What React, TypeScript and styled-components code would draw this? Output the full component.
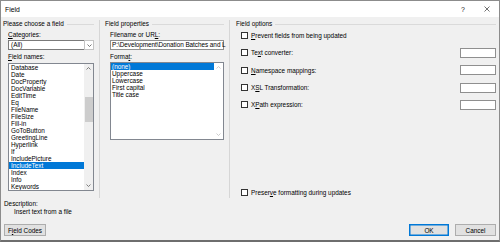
import styled, { createGlobalStyle } from 'styled-components';

const GlobalStyle = createGlobalStyle`
  html, body {
    margin: 0;
    padding: 0;
    background: #f0f0f0;
  }
  body {
    font-family: 'Liberation Sans', Arial, sans-serif;
    font-size: 6.4px;
    color: #000;
  }
`;

const Window = styled.div`
  width: 500px;
  height: 242px;
  box-sizing: border-box;
  border: 1px solid #8c8c8c;
  border-bottom: 2px solid #6e6e6e;
  background: #f0f0f0;
  display: flex;
  flex-direction: column;
  overflow: hidden;
`;

const TitleBar = styled.div`
  height: 16px;
  flex: none;
  background: #fff;
  display: flex;
  align-items: center;
  padding-left: 4px;
`;

const Title = styled.div`
  flex: 1;
  font-size: 6.8px;
`;

const TitleButton = styled.div`
  width: 24px;
  height: 16px;
  display: flex;
  align-items: center;
  justify-content: center;
  font-size: 7px;
  color: #222;
`;

const Columns = styled.div`
  height: 181px;
  box-sizing: border-box;
  padding-top: 3px;
  display: grid;
  grid-template-columns: 98px 1px 129px 1px 1fr;
`;

const Separator = styled.div`
  background: #d6d6d6;
`;

const Column = styled.div<{ $left: number; $right: number }>`
  display: flex;
  flex-direction: column;
  padding-left: ${(p) => p.$left}px;
  padding-right: ${(p) => p.$right}px;
  min-width: 0;
`;

const GroupHeader = styled.div`
  height: 8px;
  line-height: 8px;
  display: flex;
  align-items: center;
  gap: 3px;
  white-space: nowrap;

  &::after {
    content: '';
    flex: 1;
    border-top: 1px solid #dadada;
  }
`;

const Fields = styled.div`
  margin-left: 5px;
  display: flex;
  flex-direction: column;
`;

const Label = styled.div<{ $top: number }>`
  height: 8px;
  line-height: 8px;
  margin-top: ${(p) => p.$top}px;
  white-space: nowrap;
`;

const Key = styled.span`
  text-decoration: underline;
  text-underline-offset: 0.5px;
`;

const ComboBox = styled.div`
  margin-top: 1px;
  height: 10px;
  box-sizing: border-box;
  border: 1px solid #7a7a7a;
  background: #fff;
  display: flex;
  align-items: stretch;
`;

const ComboText = styled.div`
  flex: 1;
  line-height: 8px;
  padding-left: 2px;
`;

const ComboArrow = styled.div`
  width: 8px;
  border: 1px solid #c4c4c4;
  margin: -1px -1px -1px 0;
  background: #fff;
  display: flex;
  align-items: center;
  justify-content: center;
`;

const TextInput = styled.div<{ $width?: number; $top?: number }>`
  height: 10px;
  width: ${(p) => (p.$width ? `${p.$width}px` : 'auto')};
  margin-top: ${(p) => p.$top ?? 0}px;
  box-sizing: border-box;
  border: 1px solid #8f8f8f;
  background: #fff;
  line-height: 8px;
  padding-left: 1px;
  white-space: nowrap;
  letter-spacing: -0.05px;
  flex: none;
`;

const ListBox = styled.div<{ $height: number; $top: number }>`
  margin-top: ${(p) => p.$top}px;
  height: ${(p) => p.$height}px;
  box-sizing: border-box;
  border: 1px solid #828790;
  background: #fff;
  display: flex;
  overflow: hidden;
`;

const ListItems = styled.div`
  flex: 1;
  display: flex;
  flex-direction: column;
`;

const ListItem = styled.div<{ $selected?: boolean; $pad: number }>`
  height: 7px;
  line-height: 7px;
  flex: none;
  padding-left: ${(p) => p.$pad}px;
  white-space: nowrap;
  background: ${(p) => (p.$selected ? '#0078d7' : 'transparent')};
  color: ${(p) => (p.$selected ? '#fff' : '#000')};
`;

const ScrollBar = styled.div<{ $disabled?: boolean }>`
  width: 9px;
  flex: none;
  background: ${(p) => (p.$disabled ? '#fff' : '#f0f0f0')};
  display: flex;
  flex-direction: column;
  align-items: center;
  color: ${(p) => (p.$disabled ? '#c0c0c0' : '#606060')};
`;

const ScrollArrow = styled.div`
  height: 9px;
  width: 9px;
  flex: none;
  display: flex;
  align-items: center;
  justify-content: center;
`;

const ScrollTrack = styled.div`
  flex: 1;
  width: 100%;
  display: flex;
  flex-direction: column;
  align-items: center;
`;

const Thumb = styled.div`
  width: 8px;
  height: 25px;
  margin-top: 24px;
  background: #cdcdcd;
`;

const OptionRows = styled.div`
  margin-top: -1px;
  margin-left: 5px;
  display: flex;
  flex-direction: column;
  flex: 1;
`;

const OptionRow = styled.div<{ $push?: boolean }>`
  height: ${(p) => (p.$push ? 10 : 17.3)}px;
  margin-top: ${(p) => (p.$push ? 'auto' : '0')};
  margin-bottom: ${(p) => (p.$push ? 1 : 0)}px;
  display: flex;
  align-items: center;
  gap: 3px;
  white-space: nowrap;
`;

const CheckBox = styled.div`
  width: 7px;
  height: 7px;
  box-sizing: border-box;
  border: 1px solid #333;
  background: #fff;
  flex: none;
`;

const OptionLabel = styled.div`
  flex: 1;
`;

const Description = styled.div`
  padding-left: 3px;
  margin-top: 2px;
`;

const DescLine = styled.div<{ $indent?: number }>`
  height: 8px;
  line-height: 8px;
  padding-left: ${(p) => p.$indent ?? 0}px;
`;

const Footer = styled.div`
  margin-top: 8px;
  padding: 0 3px;
  display: flex;
  gap: 6px;
`;

const Button = styled.div<{ $width: number; $default?: boolean }>`
  width: ${(p) => p.$width}px;
  height: 12px;
  box-sizing: border-box;
  border: 1px solid ${(p) => (p.$default ? '#0078d7' : '#adadad')};
  box-shadow: ${(p) => (p.$default ? 'inset 0 0 0 0.5px #0078d7' : 'none')};
  background: #e1e1e1;
  display: flex;
  align-items: center;
  justify-content: center;
  flex: none;

  &:first-child {
    margin-right: auto;
  }
`;

const Chevron = ({ up }: { up?: boolean }) => (
  <svg width="5" height="3" viewBox="0 0 5 3">
    <polyline
      points={up ? '0.5,2.5 2.5,0.5 4.5,2.5' : '0.5,0.5 2.5,2.5 4.5,0.5'}
      fill="none"
      stroke="currentColor"
      strokeWidth="0.8"
    />
  </svg>
);

const fieldNames = [
  'Database',
  'Date',
  'DocProperty',
  'DocVariable',
  'EditTime',
  'Eq',
  'FileName',
  'FileSize',
  'Fill-in',
  'GoToButton',
  'GreetingLine',
  'Hyperlink',
  'If',
  'IncludePicture',
  'IncludeText',
  'Index',
  'Info',
  'Keywords',
];

const formats = ['(none)', 'Uppercase', 'Lowercase', 'First capital', 'Title case'];

const options: [string, string, string, boolean][] = [
  ['', 'P', 'revent fields from being updated', false],
  ['Te', 'x', 't converter:', true],
  ['', 'N', 'amespace mappings:', true],
  ['X', 'S', 'L Transformation:', true],
  ['X', 'P', 'ath expression:', true],
];

const App = () => {
  return (
    <>
      <GlobalStyle />
      <Window>
        <TitleBar>
          <Title>Field</Title>
          <TitleButton>?</TitleButton>
          <TitleButton>
            <svg width="6" height="6" viewBox="0 0 6 6">
              <path d="M0.5 0.5 L5.5 5.5 M5.5 0.5 L0.5 5.5" stroke="#333" strokeWidth="0.7" />
            </svg>
          </TitleButton>
        </TitleBar>

        <Columns>
          <Column $left={2} $right={5}>
            <GroupHeader>Please choose a field</GroupHeader>
            <Fields>
              <Label $top={3}>
                <Key>C</Key>ategories:
              </Label>
              <ComboBox>
                <ComboText>(All)</ComboText>
                <ComboArrow>
                  <svg width="5" height="3" viewBox="0 0 5 3" color="#555">
                    <polyline points="0.5,0.5 2.5,2.5 4.5,0.5" fill="none" stroke="currentColor" strokeWidth="0.8" />
                  </svg>
                </ComboArrow>
              </ComboBox>
              <Label $top={3}>
                <Key>F</Key>ield names:
              </Label>
              <ListBox $top={2} $height={128}>
                <ListItems>
                  {fieldNames.map((name) => (
                    <ListItem key={name} $pad={2} $selected={name === 'IncludeText'}>
                      {name}
                    </ListItem>
                  ))}
                </ListItems>
                <ScrollBar>
                  <ScrollArrow>
                    <Chevron up />
                  </ScrollArrow>
                  <ScrollTrack>
                    <Thumb />
                  </ScrollTrack>
                  <ScrollArrow>
                    <Chevron />
                  </ScrollArrow>
                </ScrollBar>
              </ListBox>
            </Fields>
          </Column>

          <Separator />

          <Column $left={5} $right={5}>
            <GroupHeader>Field properties</GroupHeader>
            <Fields>
              <Label $top={3}>
                Filename or UR<Key>L</Key>:
              </Label>
              <TextInput $top={1}>P:\Development\Donation Batches and L</TextInput>
              <Label $top={3}>
                Forma<Key>t</Key>:
              </Label>
              <ListBox $top={1} $height={78}>
                <ListItems>
                  {formats.map((f, i) => (
                    <ListItem key={f} $pad={1} $selected={i === 0}>
                      {f}
                    </ListItem>
                  ))}
                </ListItems>
                <ScrollBar $disabled>
                  <ScrollArrow>
                    <Chevron up />
                  </ScrollArrow>
                  <ScrollTrack />
                  <ScrollArrow>
                    <Chevron />
                  </ScrollArrow>
                </ScrollBar>
              </ListBox>
            </Fields>
          </Column>

          <Separator />

          <Column $left={6} $right={3}>
            <GroupHeader>Field options</GroupHeader>
            <OptionRows>
              {options.map(([pre, key, post, hasInput]) => (
                <OptionRow key={pre + key + post}>
                  <CheckBox />
                  <OptionLabel>
                    {pre}
                    <Key>{key}</Key>
                    {post}
                  </OptionLabel>
                  {hasInput && <TextInput $width={36} />}
                </OptionRow>
              ))}
              <OptionRow $push>
                <CheckBox />
                <OptionLabel>
                  Preser<Key>v</Key>e formatting during updates
                </OptionLabel>
              </OptionRow>
            </OptionRows>
          </Column>
        </Columns>

        <Description>
          <DescLine>Description:</DescLine>
          <DescLine $indent={10}>Insert text from a file</DescLine>
        </Description>

        <Footer>
          <Button $width={42}>
            F<Key>i</Key>eld Codes
          </Button>
          <Button $width={40} $default>
            OK
          </Button>
          <Button $width={41}>Cancel</Button>
        </Footer>
      </Window>
    </>
  );
};

export default App;
